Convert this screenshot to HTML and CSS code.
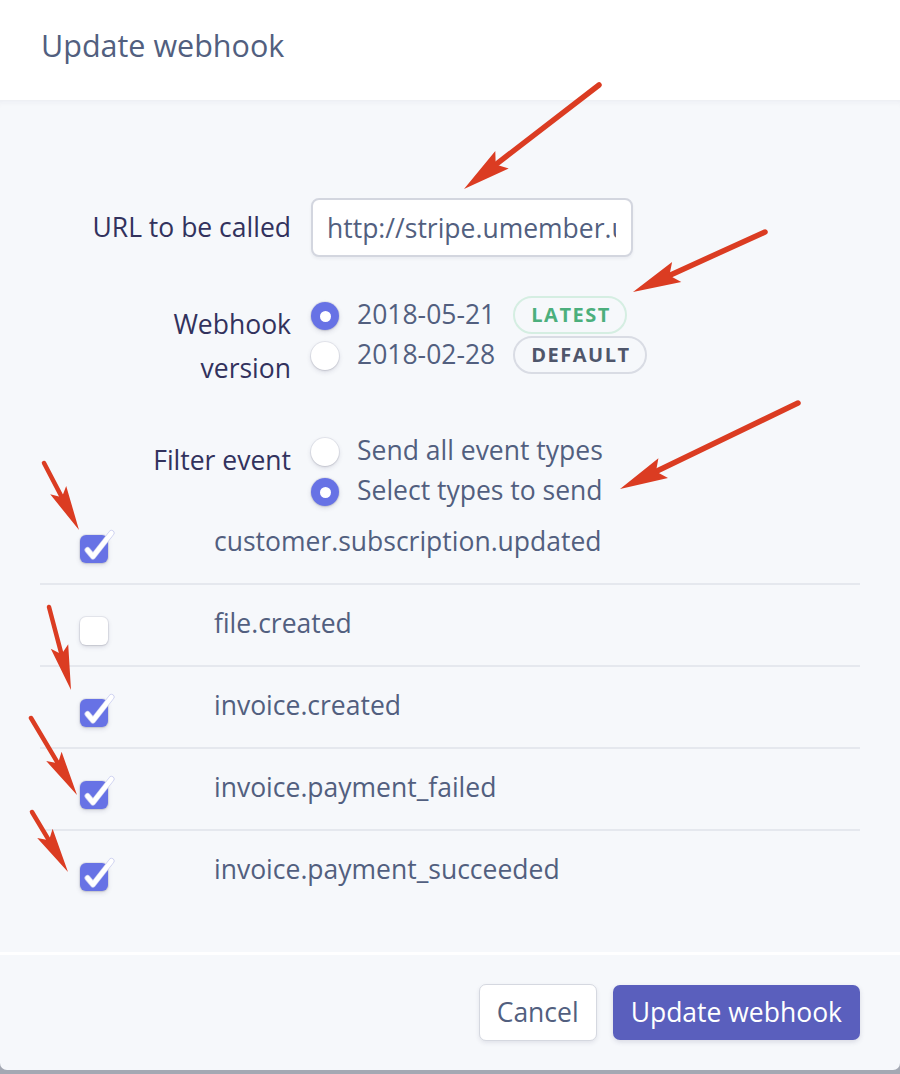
FILE: index.html
```html
<!DOCTYPE html>
<html lang="en">
<head>
<meta charset="utf-8">
<title>Update webhook</title>
<link rel="stylesheet" href="styles.css">
</head>
<body>
<div class="modal">
  <header class="modal-header">
    <h1 class="title">Update webhook</h1>
  </header>
  <main class="modal-body">
    <div class="form-row row-url">
      <label class="field-label label-url" for="url">URL to be called</label>
      <input id="url" class="url-input" type="text" value="http://stripe.umember.us/webhooks/stripe" readonly>
    </div>
    <div class="form-row row-version">
      <div class="field-label label-multi">Webhook<br>version</div>
      <div class="options">
        <div class="option"><span class="radio checked"></span><span class="option-text">2018-05-21</span><span class="badge badge-latest">LATEST</span></div>
        <div class="option"><span class="radio"></span><span class="option-text">2018-02-28</span><span class="badge badge-default">DEFAULT</span></div>
      </div>
    </div>
    <div class="form-row row-filter">
      <div class="field-label label-multi">Filter event</div>
      <div class="options">
        <div class="option"><span class="radio"></span><span class="option-text">Send all event types</span></div>
        <div class="option"><span class="radio checked"></span><span class="option-text">Select types to send</span></div>
      </div>
    </div>
    <ul class="event-list">
      <li class="event-row">
        <span class="checkbox checked"><svg viewBox="0 0 28 28" width="28" height="28"><path class="halo" d="M7.5 15 L13 21.5 L31.5 -2" /><path class="tick" d="M7.5 15 L13 21.5 L31.5 -2" /></svg></span>
        <span class="event-name">customer.subscription.updated</span>
      </li>
      <li class="event-row">
        <span class="checkbox"></span>
        <span class="event-name">file.created</span>
      </li>
      <li class="event-row">
        <span class="checkbox checked"><svg viewBox="0 0 28 28" width="28" height="28"><path class="halo" d="M7.5 15 L13 21.5 L31.5 -2" /><path class="tick" d="M7.5 15 L13 21.5 L31.5 -2" /></svg></span>
        <span class="event-name">invoice.created</span>
      </li>
      <li class="event-row">
        <span class="checkbox checked"><svg viewBox="0 0 28 28" width="28" height="28"><path class="halo" d="M7.5 15 L13 21.5 L31.5 -2" /><path class="tick" d="M7.5 15 L13 21.5 L31.5 -2" /></svg></span>
        <span class="event-name">invoice.payment_failed</span>
      </li>
      <li class="event-row">
        <span class="checkbox checked"><svg viewBox="0 0 28 28" width="28" height="28"><path class="halo" d="M7.5 15 L13 21.5 L31.5 -2" /><path class="tick" d="M7.5 15 L13 21.5 L31.5 -2" /></svg></span>
        <span class="event-name">invoice.payment_succeeded</span>
      </li>
    </ul>
  </main>
  <footer class="modal-footer">
    <button class="btn btn-cancel" type="button">Cancel</button>
    <button class="btn btn-primary" type="button">Update webhook</button>
  </footer>
</div>

<svg class="annotations" width="900" height="1074" viewBox="0 0 900 1074">
  <g class="arrow big">
    <line x1="599" y1="85" x2="495.7" y2="164.6"/>
    <polygon points="464,189 495.3,151 495.7,164.6 508.7,168.4"/>
  </g>
  <g class="arrow big">
    <line x1="765" y1="232" x2="669.4" y2="275.4"/>
    <polygon points="633,292 672.1,262.1 669.4,275.4 681.3,282.1"/>
  </g>
  <g class="arrow big">
    <line x1="798" y1="403" x2="656" y2="471.6"/>
    <polygon points="620,489 658.4,458.2 656,471.6 668,478"/>
  </g>
  <g class="arrow small">
    <line x1="44" y1="463" x2="61.9" y2="497.2"/>
    <polygon points="79,530 50.2,494.3 61.9,497.2 66.2,485.9"/>
  </g>
  <g class="arrow small">
    <line x1="49" y1="607" x2="61.5" y2="654.3"/>
    <polygon points="71,690 50.8,648.8 61.5,654.3 68.2,644.2"/>
  </g>
  <g class="arrow small">
    <line x1="31" y1="718" x2="58" y2="763.3"/>
    <polygon points="77,795 46.2,761 58,763.3 61.6,751.8"/>
  </g>
  <g class="arrow small">
    <line x1="32" y1="812" x2="49" y2="840.3"/>
    <polygon points="68,872 37.2,838 49,840.3 52.6,828.8"/>
  </g>
</svg>
</body>
</html>
```

FILE: styles.css
```css
html, body {
  margin: 0;
  padding: 0;
}

body {
  width: 900px;
  height: 1074px;
  overflow: hidden;
  position: relative;
  background: #a4a8b3;
  font-family: "Open Sans", "Noto Sans", "DejaVu Sans", sans-serif;
  color: #525f7f;
}

.modal {
  width: 900px;
  height: 1070px;
  background: #f6f8fb;
  border-radius: 0 0 7px 7px;
  overflow: hidden;
  display: flex;
  flex-direction: column;
}

.modal-header {
  height: 100px;
  box-sizing: border-box;
  padding: 25px 41px 0;
  background: #ffffff;
  flex: none;
}

.title {
  margin: 0;
  font-size: 30.5px;
  line-height: 40px;
  font-weight: 400;
  color: #525f7f;
}

.modal-body {
  height: 852px;
  box-sizing: border-box;
  padding: 98px 40px 0;
  flex: none;
  box-shadow: inset 0 6px 6px -5px rgba(50, 50, 93, 0.07);
}

.form-row {
  display: flex;
  align-items: flex-start;
}

.field-label {
  width: 251px;
  flex: none;
  margin-right: 20px;
  text-align: right;
  font-size: 26.5px;
  color: #32325d;
}

.label-url {
  line-height: 59px;
}

.label-multi {
  line-height: 44px;
  padding-top: 8px;
}

.url-input {
  width: 322px;
  height: 59px;
  box-sizing: border-box;
  margin: 0;
  padding: 0 15px 0 14px;
  border: 2px solid #d3d6df;
  border-radius: 8px;
  background: #ffffff;
  font-family: inherit;
  font-size: 26.5px;
  color: #525f7f;
  outline: none;
  box-shadow: 0 2px 3px rgba(50, 50, 93, 0.06);
}

.row-version {
  margin-top: 37px;
}

.row-filter {
  margin-top: 40px;
}

.options {
  display: flex;
  flex-direction: column;
}

.option {
  display: flex;
  align-items: center;
  height: 40px;
  font-size: 26.5px;
  line-height: 40px;
}

.radio {
  width: 28px;
  height: 28px;
  border-radius: 50%;
  background: #ffffff;
  flex: none;
  margin-top: 4px;
  display: flex;
  align-items: center;
  justify-content: center;
  box-shadow: 0 0 0 1px rgba(50, 50, 93, 0.08), 0 2px 5px rgba(50, 50, 93, 0.14), 0 1px 2px rgba(0, 0, 0, 0.08);
}

.radio.checked {
  background: #6772e5;
}

.radio.checked::after {
  content: "";
  width: 11px;
  height: 11px;
  border-radius: 50%;
  background: #ffffff;
}

.option-text {
  margin-left: 18px;
  color: #525f7f;
}

.badge {
  margin-left: 18px;
  height: 38px;
  box-sizing: border-box;
  padding: 0 14px 0 16px;
  border-radius: 19px;
  border: 2px solid;
  display: inline-flex;
  align-items: center;
  font-size: 20px;
  font-weight: 700;
  letter-spacing: 1.5px;
  line-height: 1;
  margin-top: 2px;
}

.badge-latest {
  color: #4caf7d;
  border-color: #d5eee2;
}

.badge-default {
  color: #4f566b;
  border-color: #d9dce4;
}

.event-list {
  list-style: none;
  margin: -7px 0 0;
  padding: 0;
}

.event-row {
  display: flex;
  align-items: flex-start;
  height: 80px;
  border-bottom: 2px solid #e5e8ee;
}

.event-row:last-child {
  border-bottom: none;
}

.checkbox {
  width: 28px;
  height: 28px;
  flex: none;
  margin: 32px 0 0 40px;
  border-radius: 6px;
  background: #ffffff;
  box-shadow: 0 0 0 1px rgba(50, 50, 93, 0.08), 0 2px 5px rgba(50, 50, 93, 0.14), 0 1px 2px rgba(0, 0, 0, 0.08);
}

.checkbox.checked {
  background: #6772e5;
}

.checkbox svg {
  display: block;
  overflow: visible;
}

.checkbox path {
  fill: none;
  stroke-linecap: round;
  stroke-linejoin: round;
}

.checkbox .halo {
  stroke: #c9cdef;
  stroke-width: 6;
}

.checkbox .tick {
  stroke: #ffffff;
  stroke-width: 4.5;
}

.event-name {
  margin-left: 106px;
  padding-top: 18px;
  font-size: 26.5px;
  line-height: 40px;
  color: #525f7f;
}

.modal-footer {
  flex: 1;
  border-top: 3px solid #ffffff;
  display: flex;
  justify-content: flex-end;
  align-items: center;
  gap: 16px;
  padding-right: 40px;
}

.btn {
  font-family: inherit;
  font-size: 26.5px;
  line-height: 1;
  border-radius: 7px;
  margin: 0;
  cursor: pointer;
}

.btn-cancel {
  height: 57px;
  padding: 0 17px;
  background: #ffffff;
  color: #525f7f;
  border: 1px solid #d5d8e0;
  box-shadow: 0 2px 4px rgba(50, 50, 93, 0.1);
}

.btn-primary {
  height: 55px;
  padding: 0 18px;
  background: #5a5fbd;
  color: #ffffff;
  border: none;
  box-shadow: 0 2px 5px rgba(50, 50, 93, 0.15);
}

.annotations {
  position: absolute;
  top: 0;
  left: 0;
  pointer-events: none;
}

.arrow line {
  stroke: #db3c22;
  stroke-linecap: round;
}

.arrow.big line {
  stroke-width: 5.5;
}

.arrow.small line {
  stroke-width: 4.5;
}

.arrow polygon {
  fill: #db3c22;
}
```
